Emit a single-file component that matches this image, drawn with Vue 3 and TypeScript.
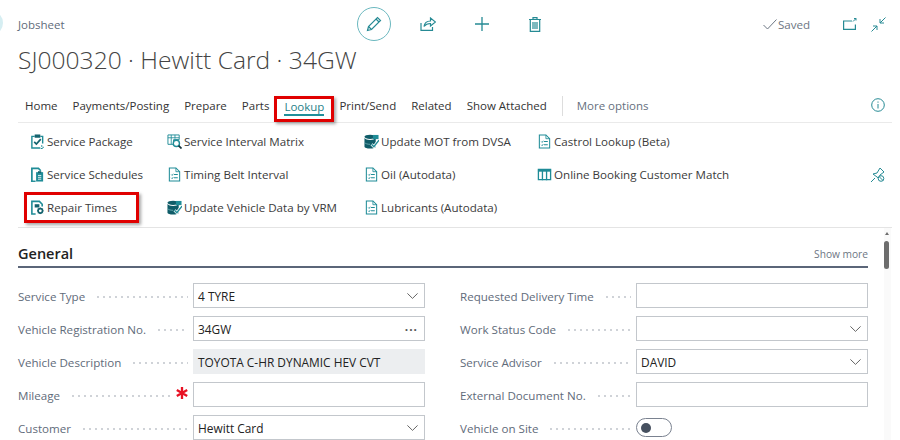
<script setup lang="ts">
interface Action {
  label: string;
  icon: string;
  marked?: boolean;
}

interface Field {
  label: string;
  value?: string;
  kind: 'select' | 'text' | 'lookup' | 'readonly' | 'toggle';
  required?: boolean;
}

const tabs = ['Home', 'Payments/Posting', 'Prepare', 'Parts', 'Lookup', 'Print/Send', 'Related', 'Show Attached'];

const actionColumns: Action[][] = [
  [
    { label: 'Service Package', icon: 'clipboard' },
    { label: 'Service Schedules', icon: 'schedule' },
    { label: 'Repair Times', icon: 'gear-doc', marked: true },
  ],
  [
    { label: 'Service Interval Matrix', icon: 'matrix' },
    { label: 'Timing Belt Interval', icon: 'doc' },
    { label: 'Update Vehicle Data by VRM', icon: 'update' },
  ],
  [
    { label: 'Update MOT from DVSA', icon: 'update' },
    { label: 'Oil (Autodata)', icon: 'doc' },
    { label: 'Lubricants (Autodata)', icon: 'doc' },
  ],
  [
    { label: 'Castrol Lookup (Beta)', icon: 'doc' },
    { label: 'Online Booking Customer Match', icon: 'table' },
  ],
];

const leftFields: Field[] = [
  { label: 'Service Type', value: '4 TYRE', kind: 'select' },
  { label: 'Vehicle Registration No.', value: '34GW', kind: 'lookup' },
  { label: 'Vehicle Description', value: 'TOYOTA C-HR DYNAMIC HEV CVT', kind: 'readonly' },
  { label: 'Mileage', kind: 'text', required: true },
  { label: 'Customer', value: 'Hewitt Card', kind: 'select' },
];

const rightFields: Field[] = [
  { label: 'Requested Delivery Time', kind: 'text' },
  { label: 'Work Status Code', kind: 'select' },
  { label: 'Service Advisor', value: 'DAVID', kind: 'select' },
  { label: 'External Document No.', kind: 'text' },
  { label: 'Vehicle on Site', kind: 'toggle' },
];

const fieldColumns = [leftFields, rightFields];
</script>

<template>
  <div class="page">
    <svg class="defs" aria-hidden="true">
      <symbol id="clipboard" viewBox="0 0 16 16">
        <path d="M5 2.500H2v12.500h9" fill="none" stroke="currentColor" stroke-width="1.500" />
        <path d="M11 2.500h2.500V10" fill="none" stroke="currentColor" stroke-width="1.500" />
        <path d="M5 .5h6v3.500H5z" fill="#14636e" />
        <path d="M4.500 8.500l2.300 2.300L11.500 5.500" fill="none" stroke="#14636e" stroke-width="1.800" />
        <path d="M12.500 12v1.500M14 13.500V15M11.500 15.500h2" stroke="currentColor" stroke-width="1.200" />
      </symbol>
      <symbol id="schedule" viewBox="0 0 16 16">
        <path d="M2 15.200V1.500h7l2.500 2.500" fill="none" stroke="currentColor" stroke-width="1.800" />
        <path d="M1 15.200h5" stroke="currentColor" stroke-width="1.500" />
        <path d="M6.500 5.500h7.500v10H6.500z" fill="currentColor" />
        <path d="M8.500 4.500h3.500v2H8.500z" fill="#14636e" />
        <path d="M8.500 9h3.500M8.500 11h3.500M8.500 13h3.500" stroke="#fff" stroke-width="0.900" />
      </symbol>
      <symbol id="gear-doc" viewBox="0 0 16 16">
        <path d="M6 15H2V1.500h8l3 3V7" fill="none" stroke="currentColor" stroke-width="1.700" />
        <path d="M5 4.500h5V8H5z" fill="#14636e" />
        <circle cx="11" cy="11.500" r="2.400" fill="none" stroke="#14636e" stroke-width="1.800" />
        <path d="M11 8v1M11 14v1M7.600 11.500h1M13.400 11.500h1M8.600 9.100l.7.7M12.800 13.300l.7.7M13.400 9.100l-.7.7M9.200 13.300l-.7.7" stroke="#14636e" stroke-width="1" />
      </symbol>
      <symbol id="matrix" viewBox="0 0 16 16">
        <path d="M1 1h12v5H7v5H1z" fill="none" stroke="currentColor" stroke-width="1" />
        <path d="M1 4h12M4.500 1v10M8.500 1v4" stroke="currentColor" stroke-width="0.900" />
        <circle cx="10" cy="10" r="3.300" fill="#fff" stroke="currentColor" stroke-width="1.500" />
        <path d="M12.300 12.300L15.500 15.500" stroke="#17343d" stroke-width="1.800" />
      </symbol>
      <symbol id="doc" viewBox="0 0 16 16">
        <path d="M2.500 15V1h7l4 4v10z" fill="none" stroke="currentColor" stroke-width="1.100" />
        <path d="M9.500 1v4h4" fill="none" stroke="currentColor" stroke-width="0.900" />
        <path d="M7.500 8h4M7.500 11.500h4" stroke="currentColor" stroke-width="1.100" />
        <path d="M4.500 8l1 1 1.200-1.800M4.500 11.500l1 1 1.200-1.800" fill="none" stroke="currentColor" stroke-width="0.900" />
      </symbol>
      <symbol id="update" viewBox="0 0 16 16">
        <ellipse cx="6.500" cy="3" rx="6" ry="2.300" fill="#0f5c68" />
        <path d="M.5 4.300v9.200c0 1.200 2.700 2 6 2s6-.8 6-2V4.300c-1 1.300-3.200 2-6 2s-5-.7-6-2z" fill="#0f5c68" />
        <path d="M.5 9c1 1.300 3.200 2 6 2" fill="none" stroke="#7fb9c0" stroke-width="0.800" />
        <path d="M9.500 1h6v4.500h-6z" fill="currentColor" />
        <path d="M8 11l2.500 2.500L16 6.500" fill="none" stroke="#fff" stroke-width="3" />
        <path d="M8 11l2.500 2.500L16 6.500" fill="none" stroke="currentColor" stroke-width="1.500" />
      </symbol>
      <symbol id="table" viewBox="0 0 16 16">
        <path d="M1.500 2.500h13v11h-13z" fill="none" stroke="currentColor" stroke-width="1.400" />
        <path d="M1 2.500h14v2.500H1z" fill="currentColor" />
        <path d="M5.800 4v10M10.200 4v10" stroke="currentColor" stroke-width="1.400" />
      </symbol>
    </svg>

    <span class="corner" />

    <header class="head">
      <div class="head-top">
        <span class="caption">Jobsheet</span>
        <div class="head-tools">
          <button class="circle-btn" type="button" aria-label="Edit">
            <svg width="18" height="18" viewBox="0 0 18 18" fill="none" stroke="currentColor" stroke-width="1.200">
              <path d="M2.500 15.500l1-4L12.500 2.500l3 3-9 9z" />
              <path d="M11 4l3 3M3.500 11.500l3 3" />
            </svg>
          </button>
          <svg class="tool share" width="16" height="14" viewBox="0 0 16 14" fill="none" stroke="currentColor" stroke-width="1.200">
            <path d="M1 6v7.300h11.500V10" />
            <path d="M4 9.500c.5-3.500 3-5.500 6.500-5.500V1L15.500 5l-5 4V6.500C7.800 6.500 5.500 7.500 4 9.500z" />
          </svg>
          <svg class="tool plus" width="14" height="14" viewBox="0 0 14 14" stroke="currentColor" stroke-width="1.300">
            <path d="M7 0v14M0 7h14" />
          </svg>
          <svg class="tool" width="12" height="15" viewBox="0 0 12 15" fill="none" stroke="currentColor" stroke-width="1.200">
            <path d="M0 2.500h12M4 2.500V.7h4v1.800M1.300 2.500v11.900h9.400V2.500" />
            <path d="M4 5v7M6 5v7M8 5v7" />
          </svg>
        </div>
        <div class="head-status">
          <span class="saved">
            <svg width="14" height="11" viewBox="0 0 14 11" fill="none" stroke="currentColor" stroke-width="1">
              <path d="M.5 6L4.500 10 13.500.5" />
            </svg>
            Saved
          </span>
          <svg class="tool" width="14" height="12" viewBox="0 0 14 12" fill="none" stroke="currentColor" stroke-width="1.200">
            <path d="M9 3H.6v8.400h11.800V6.500" />
            <path d="M10 3.500L13 .5M11 .5h2v2" stroke-width="1" />
          </svg>
          <svg class="tool collapse" width="15" height="15" viewBox="0 0 15 15" fill="none" stroke="currentColor" stroke-width="1">
            <path d="M14.500.5L9 6M9 2V6h4M.5 14.500L6 9M2 9H6v4" />
          </svg>
        </div>
      </div>
      <h1 class="title">SJ000320 · Hewitt Card · 34GW</h1>
    </header>

    <nav class="tabs">
      <span
        v-for="tab in tabs"
        :key="tab"
        class="tab"
        :class="{ 'tab-active': tab === 'Lookup' }"
      >
        <span class="tab-text">{{ tab }}</span>
      </span>
      <span class="tab-sep" />
      <span class="tab more">More options</span>
      <svg class="info" width="14" height="14" viewBox="0 0 14 14" fill="none" stroke="currentColor">
        <circle cx="7" cy="7" r="6.300" />
        <path d="M7 6v4.500M7 3.500v1.200" />
      </svg>
    </nav>

    <section class="actions">
      <div
        v-for="(column, index) in actionColumns"
        :key="index"
        class="action-col"
      >
        <div
          v-for="action in column"
          :key="action.label"
          class="action"
          :class="{ 'action-marked': action.marked }"
        >
          <svg class="action-icon"><use :href="`#${action.icon}`" /></svg>
          {{ action.label }}
        </div>
      </div>
      <svg class="pin" width="15" height="16" viewBox="0 0 15 16" fill="none" stroke="currentColor">
        <path d="M1 15l4-4M3 7l4-1 3-5 4 4-4 3-1 3.500z" />
        <circle cx="11" cy="11.500" r="2.800" fill="#fff" />
        <path d="M9 9.500l4 4" />
      </svg>
    </section>

    <main class="content">
      <div class="section-head">
        <h2 class="section-title">General</h2>
        <span class="show-more">Show more</span>
      </div>
      <div class="fields">
        <div
          v-for="(fields, index) in fieldColumns"
          :key="index"
          class="field-col"
        >
          <div
            v-for="field in fields"
            :key="field.label"
            class="field"
          >
            <label class="field-label">
              <span>{{ field.label }}</span>
              <span class="dots" />
              <svg v-if="field.required" class="required" width="12" height="12" viewBox="0 0 12 12" stroke="currentColor" stroke-width="2.300">
                <path d="M6 0v12M.8 3l10.400 6M.8 9l10.400-6" />
              </svg>
            </label>
            <div v-if="field.kind === 'toggle'" class="toggle">
              <span class="knob" />
            </div>
            <div
              v-else
              class="input"
              :class="{ 'input-readonly': field.kind === 'readonly' }"
            >
              <span>{{ field.value }}</span>
              <svg v-if="field.kind === 'select'" class="chevron" width="11" height="6" viewBox="0 0 11 6" fill="none" stroke="currentColor">
                <path d="M.4.400L5.500 5.400 10.600.4" />
              </svg>
              <span v-if="field.kind === 'lookup'" class="ellipsis">···</span>
            </div>
          </div>
        </div>
      </div>
      <div class="scrollbar">
        <span class="scroll-arrow" />
        <span class="scroll-thumb" />
      </div>
    </main>
  </div>
</template>

<style>
html,
body {
  margin: 0;
  background: #fff;
}
</style>

<style scoped>
.page {
  position: relative;
  width: 900px;
  height: 440px;
  overflow: hidden;
  background: #fff;
  color: #333;
  font-family: "Open Sans", "Noto Sans", sans-serif;
  font-size: 11.600px;
}

.defs {
  position: absolute;
  width: 0;
  height: 0;
}

.corner {
  position: absolute;
  left: -23px;
  top: 10px;
  width: 26px;
  height: 26px;
  border-radius: 50%;
  background: #d6eef2;
}

.head {
  padding: 7px 8px 0 18px;
}

.head-top {
  display: flex;
  align-items: center;
  height: 34px;
}

.caption {
  width: 339px;
  color: #5f6b7a;
  font-size: 11.500px;
}

.head-tools {
  display: flex;
  align-items: center;
  width: 406px;
  color: #268a94;
}

.circle-btn {
  display: flex;
  align-items: center;
  justify-content: center;
  width: 34px;
  height: 34px;
  margin-right: 29px;
  padding: 0;
  border: 1px solid #6bb8bf;
  border-radius: 50%;
  background: #fff;
  color: #268a94;
}

.share {
  margin-right: 39px;
}

.plus {
  margin-right: 40px;
}

.head-status {
  display: flex;
  align-items: center;
  color: #268a94;
}

.saved {
  display: flex;
  align-items: center;
  gap: 1px;
  width: 80px;
  color: #6d7683;
}

.collapse {
  margin-left: 14px;
}

.title {
  margin: 2px 0 0;
  color: #444;
  font-size: 24.600px;
  font-weight: 300;
  line-height: 34px;
}

.tabs {
  display: flex;
  align-items: center;
  height: 26px;
  margin: 19px 8px 0 18px;
  padding-left: 7px;
  border-bottom: 1px solid #eaeaea;
}

.tab {
  box-sizing: border-box;
  display: flex;
  align-items: center;
  height: 26px;
  margin-right: 15px;
  padding-bottom: 8px;
  color: #333;
  font-size: 11.500px;
  white-space: nowrap;
}

.tab-text {
  line-height: 15px;
}

.tab-active {
  justify-content: center;
  width: 60px;
  margin: 0 5px 0 -10px;
  padding-bottom: 3px;
  border: 3px solid #e00000;
  box-shadow: 2px 2px 3px rgba(0, 0, 0, 0.35);
  color: #1f7f89;
}

.tab-active .tab-text {
  border-bottom: 2px solid #1f8f9a;
}

.tab-sep {
  width: 1px;
  height: 20px;
  margin: 0 14px 6px 0;
  background: #ddd;
}

.more {
  color: #66707e;
}

.info {
  margin: 0 7px 8px auto;
  color: #268a94;
}

.actions {
  position: relative;
  display: flex;
  box-sizing: border-box;
  height: 105px;
  margin: 0 8px 0 18px;
  padding: 2px 0 0 12px;
  border-bottom: 1px solid #e4e4e4;
}

.action-col {
  display: flex;
  flex-direction: column;
}

.action-col:nth-child(1) {
  width: 137px;
}

.action-col:nth-child(2) {
  width: 197px;
}

.action-col:nth-child(3) {
  width: 173px;
}

.action {
  display: flex;
  align-items: center;
  gap: 1px;
  height: 33px;
  color: #3b3b3b;
  white-space: nowrap;
}

.action-icon {
  width: 15px;
  height: 15px;
  margin-right: 1px;
  color: #1f8c97;
}

.action-marked {
  box-sizing: border-box;
  width: 115px;
  height: 31px;
  margin: 1px 0 0 -6px;
  padding-left: 3px;
  border: 3px solid #e00000;
  box-shadow: 2px 2px 3px rgba(0, 0, 0, 0.35);
}

.pin {
  position: absolute;
  right: 7px;
  top: 44px;
  color: #268a94;
}

.content {
  position: relative;
  padding: 0 32px 0 18px;
}

.section-head {
  display: flex;
  align-items: center;
  justify-content: space-between;
  box-sizing: border-box;
  height: 40px;
  padding-top: 12px;
  border-bottom: 2px solid #5b6679;
}

.section-title {
  margin: 0;
  color: #222;
  font-size: 14.500px;
  font-weight: 600;
}

.show-more {
  padding-top: 2px;
  color: #6d7683;
  font-size: 10.200px;
}

.fields {
  display: grid;
  grid-template-columns: 407px 408px;
  gap: 35px;
  padding-top: 15px;
}

.field-col {
  display: flex;
  flex-direction: column;
  gap: 8px;
}

.field {
  display: grid;
  grid-template-columns: 175px 232px;
  align-items: center;
  height: 25px;
}

.field-col:nth-child(2) .field {
  grid-template-columns: 176px 232px;
}

.field-label {
  display: flex;
  align-items: center;
  min-width: 0;
  padding-top: 2px;
  color: #5f6b7a;
  white-space: nowrap;
}

.dots {
  flex: 1;
  height: 2px;
  margin: 0 5px 0 10px;
  background-image: radial-gradient(circle, #b5bac2 0.6px, transparent 0.9px);
  background-size: 6px 2px;
  background-repeat: repeat-x;
}

.required {
  margin: -5px 5px 0 0;
  color: #e81123;
}

.input {
  box-sizing: border-box;
  display: flex;
  align-items: center;
  justify-content: space-between;
  height: 25px;
  padding: 1px 6px 0 4px;
  border: 1px solid #c3c7cc;
  color: #222;
  background: #fff;
  font-size: 11.900px;
}

.input-readonly {
  border-color: #eceef0;
  background: #eceef0;
}

.chevron {
  color: #666;
}

.ellipsis {
  letter-spacing: 1px;
  color: #555;
  font-weight: 700;
}

.toggle {
  box-sizing: border-box;
  display: flex;
  align-items: center;
  width: 36px;
  height: 19px;
  padding-left: 4px;
  border: 1px solid #7a8290;
  border-radius: 10px;
}

.knob {
  width: 10px;
  height: 10px;
  border-radius: 50%;
  background: #46505f;
}

.scrollbar {
  position: absolute;
  right: 9px;
  top: 0;
  width: 7px;
  height: 213px;
  background: #fafafa;
}

.scroll-arrow {
  position: absolute;
  left: 1px;
  top: 4px;
  border-right: 2.500px solid transparent;
  border-bottom: 3px solid #6d6d6d;
  border-left: 2.500px solid transparent;
}

.scroll-thumb {
  display: block;
  width: 5px;
  height: 28px;
  margin-top: 13px;
  border-radius: 3px;
  background: #6d6d6d;
}
</style>
